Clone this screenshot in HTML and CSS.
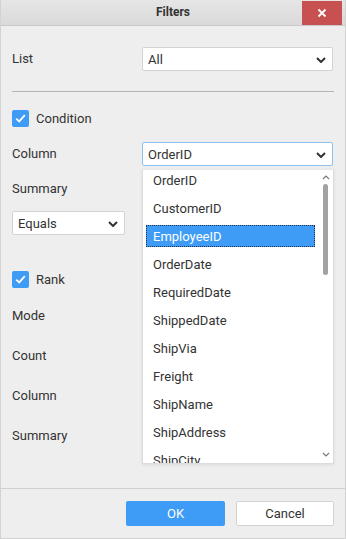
FILE: index.html
```html
<!DOCTYPE html>
<html>
<head>
<meta charset="utf-8">
<link rel="stylesheet" href="styles.css">
</head>
<body>
<div class="window">
  <div class="titlebar">
    <span class="title">Filters</span>
    <div class="close">
      <svg width="10" height="10" viewBox="0 0 10 10"><path d="M1.5 1.5 L8.5 8.5 M8.5 1.5 L1.5 8.5" stroke="#fff" stroke-width="1.8" fill="none"/></svg>
    </div>
  </div>
  <div class="body">
    <div class="row m-list">
      <span class="label">List</span>
      <div class="select wide"><span>All</span><svg class="chev" width="10" height="6" viewBox="0 0 10 6"><path d="M1 1 L5 5 L9 1" stroke="#333" stroke-width="2" fill="none"/></svg></div>
    </div>
    <div class="divider"></div>
    <div class="check m-cond">
      <span class="box"><svg width="11" height="9" viewBox="0 0 11 9"><path d="M1.2 4.6 L4.2 7.4 L9.8 1.2" stroke="#fff" stroke-width="1.8" fill="none"/></svg></span>
      <span class="label">Condition</span>
    </div>
    <div class="row m-col">
      <span class="label">Column</span>
      <div class="select wide focus"><span>OrderID</span><svg class="chev" width="10" height="6" viewBox="0 0 10 6"><path d="M1 1 L5 5 L9 1" stroke="#333" stroke-width="2" fill="none"/></svg></div>
    </div>
    <div class="textrow m-sum"><span class="label">Summary</span></div>
    <div class="select narrow m-eq"><span>Equals</span><svg class="chev" width="10" height="6" viewBox="0 0 10 6"><path d="M1 1 L5 5 L9 1" stroke="#333" stroke-width="2" fill="none"/></svg></div>
    <div class="check m-rank">
      <span class="box"><svg width="11" height="9" viewBox="0 0 11 9"><path d="M1.2 4.6 L4.2 7.4 L9.8 1.2" stroke="#fff" stroke-width="1.8" fill="none"/></svg></span>
      <span class="label">Rank</span>
    </div>
    <div class="rankrows">
      <div class="rrow"><span class="label">Mode</span></div>
      <div class="rrow"><span class="label">Count</span></div>
      <div class="rrow"><span class="label">Column</span></div>
      <div class="rrow"><span class="label">Summary</span></div>
    </div>
  </div>
  <div class="footer">
    <div class="btn ok">OK</div>
    <div class="btn cancel">Cancel</div>
  </div>

  <div class="popup">
    <ul class="items">
      <li>OrderID</li>
      <li>CustomerID</li>
      <li class="sel">EmployeeID</li>
      <li>OrderDate</li>
      <li>RequiredDate</li>
      <li>ShippedDate</li>
      <li>ShipVia</li>
      <li>Freight</li>
      <li>ShipName</li>
      <li>ShipAddress</li>
      <li>ShipCity</li>
    </ul>
    <div class="scrollbar">
      <svg class="arrow up" width="8" height="5" viewBox="0 0 8 5"><path d="M1 4 L4 1 L7 4" stroke="#777" stroke-width="1.2" fill="none"/></svg>
      <div class="thumb"></div>
      <svg class="arrow down" width="8" height="5" viewBox="0 0 8 5"><path d="M1 1 L4 4 L7 1" stroke="#777" stroke-width="1.2" fill="none"/></svg>
    </div>
  </div>
</div>
</body>
</html>
```
FILE: styles.css
```css
html, body {
  margin: 0;
  padding: 0;
  background: #eeeeee;
}
* { box-sizing: border-box; }
.window {
  position: relative;
  width: 346px;
  height: 539px;
  background: #eeeeee;
  border: 1px solid #d2d2d2;
  border-top: none;
  display: flex;
  flex-direction: column;
  font-family: Roboto, "Liberation Sans", sans-serif;
  font-size: 13px;
  color: #333;
  overflow: hidden;
}
.titlebar {
  position: relative;
  height: 26px;
  margin: 0 -1px;
  background: linear-gradient(#e6e6e6, #d9d9d9);
  border-bottom: 1px solid #c9c9c9;
  display: flex;
  align-items: center;
  justify-content: center;
  flex-shrink: 0;
}
.title {
  font-size: 12px;
  font-weight: bold;
  color: #333;
  margin-top: -1px;
}
.close {
  position: absolute;
  right: 4px;
  top: 1px;
  width: 40px;
  height: 24px;
  background: #c75050;
  display: flex;
  align-items: center;
  justify-content: center;
}
.body {
  flex: 1;
  padding: 0 12px 0 11px;
  display: flex;
  flex-direction: column;
}
.row {
  display: flex;
  align-items: center;
  justify-content: space-between;
  height: 24px;
}
.label {
  line-height: 16px;
}
.select {
  height: 24px;
  background: #fff;
  border: 1px solid #d3d3d3;
  border-radius: 2px;
  display: flex;
  align-items: center;
  justify-content: space-between;
  padding: 0 6px 0 5px;
}
.select.wide { width: 191px; }
.select.narrow { width: 113px; }
.select.focus { border-color: #8cc1ef; }
.chev { margin-top: 1px; }
.m-list { margin-top: 21px; }
.divider {
  margin-top: 20px;
  height: 1px;
  background: #b4b4b4;
  margin-right: -1px;
}
.check {
  display: flex;
  align-items: center;
  height: 17px;
  gap: 7px;
}
.box {
  width: 17px;
  height: 17px;
  background: #3e9cf6;
  border-radius: 2px;
  display: flex;
  align-items: center;
  justify-content: center;
}
.m-cond { margin-top: 18px; }
.m-col { margin-top: 15px; }
.textrow {
  height: 20px;
  display: flex;
  align-items: center;
}
.m-sum { margin-top: 13px; }
.m-eq { margin-top: 12px; }
.m-rank { margin-top: 36px; }
.rankrows {
  margin-top: 8px;
  display: flex;
  flex-direction: column;
}
.rrow {
  height: 40px;
  display: flex;
  align-items: center;
}
.footer {
  flex-shrink: 0;
  border-top: 1px solid #d0d0d0;
  padding: 12px 11px 12px 0;
  display: flex;
  justify-content: flex-end;
  gap: 11px;
}
.btn {
  height: 25px;
  border-radius: 2px;
  display: flex;
  align-items: center;
  justify-content: center;
}
.ok {
  width: 99px;
  background: #3e9cf6;
  color: #fff;
}
.cancel {
  width: 98px;
  background: #fff;
  border: 1px solid #d3d3d3;
  color: #333;
}
.popup {
  position: absolute;
  left: 141px;
  top: 169px;
  width: 192px;
  height: 295px;
  background: #fff;
  border: 1px solid #dcdcdc;
  border-top-color: #e8e8e8;
  box-shadow: 0 1px 3px rgba(0,0,0,0.08);
  overflow: hidden;
  display: flex;
}
.items {
  list-style: none;
  margin: -1px 0 0 0;
  padding: 0 0 0 3px;
  width: 172px;
}
.items li {
  height: 22px;
  margin-bottom: 6px;
  padding-left: 7px;
  display: flex;
  align-items: center;
  color: #333;
  white-space: nowrap;
}
.items li.sel {
  background: #3e9cf6;
  color: #fff;
  outline: 1px dotted #1d2f4a;
  outline-offset: -1px;
}
.scrollbar {
  position: relative;
  flex: 1;
}
.arrow {
  position: absolute;
  left: 7px;
}
.arrow.up { top: 5px; }
.arrow.down { bottom: 6px; }
.thumb {
  position: absolute;
  left: 8px;
  top: 14px;
  width: 5px;
  height: 91px;
  background: #a2a2a2;
  border-radius: 3px;
}
```
